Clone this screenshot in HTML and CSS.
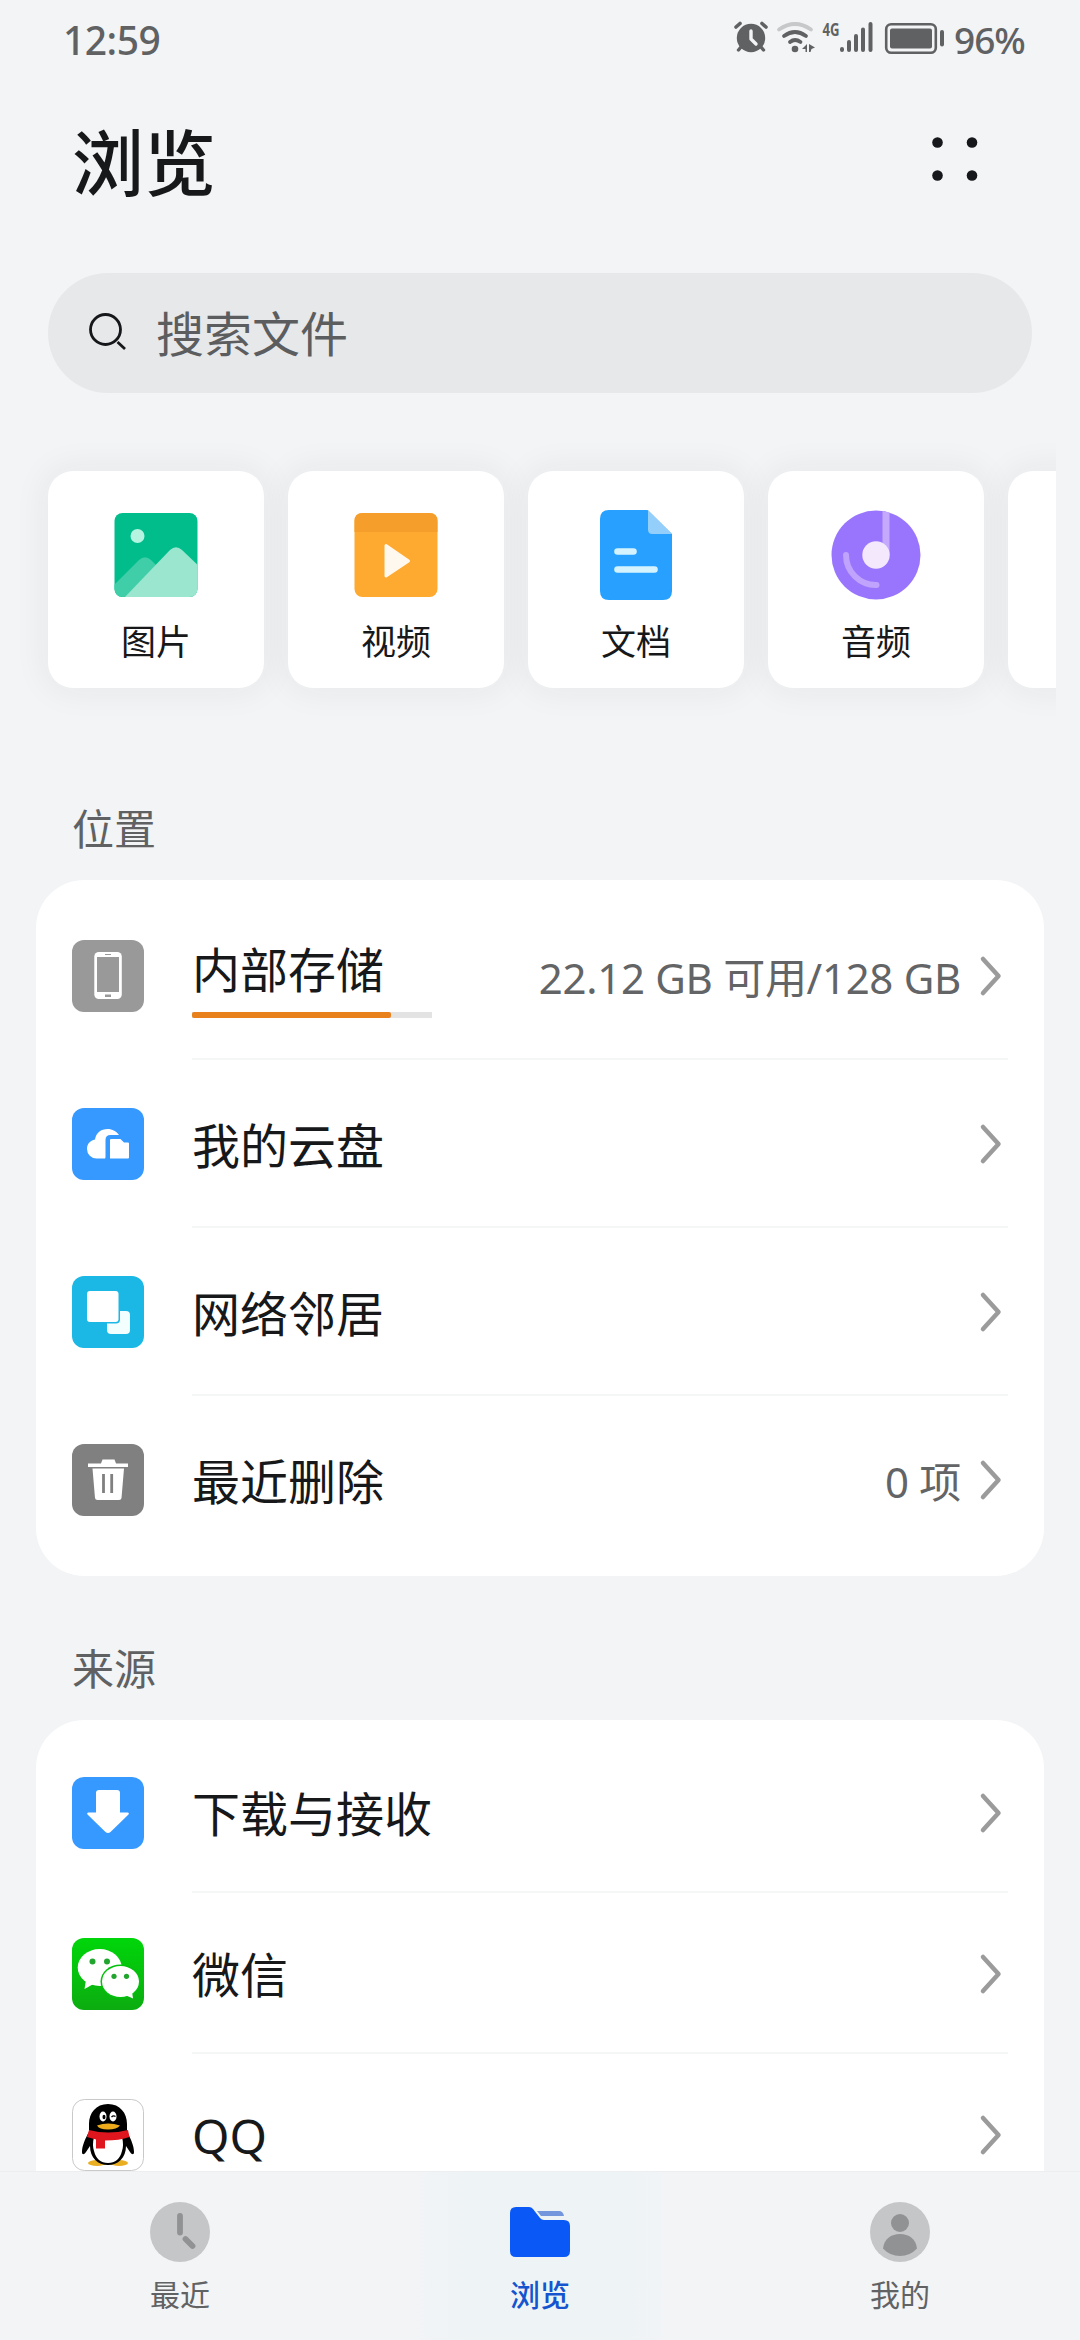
FILE: index.html
```html
<!DOCTYPE html>
<html lang="zh-CN">

<head>
    <meta charset="UTF-8">
    <meta name="viewport" content="width=device-width, initial-scale=1.0">
    <title>浏览</title>
    <link rel="stylesheet" href="styles.css">
</head>

<body>
    <div class="statusbar">
        <span class="time">12:59</span>
        <svg class="status-icons" width="212" height="56" viewBox="733 10 212 56">
            <!-- alarm -->
            <g fill="#5f6163" stroke="#5f6163" stroke-linecap="round">
                <circle cx="751" cy="38" r="14.2" stroke="none" />
                <path d="M736 27l4-3.5M766 27l-4-3.5" stroke-width="3.6" />
                <path d="M741 47l-2.500 3M761 47l2.500 3" stroke-width="3.400" />
            </g>
            <path d="M751 31v8l5 5" fill="none" stroke="#f2f4f6" stroke-width="3.4" stroke-linecap="round" stroke-linejoin="round" />
            <!-- wifi -->
            <g fill="none" stroke="#5f6163" stroke-width="3.8" stroke-linecap="round">
                <path d="M779 29.500q16-11 32 0" stroke="#c6c8ca" />
                <path d="M784 36q11-8 22 0" />
                <path d="M790 42q5-4 10.500 0" />
            </g>
            <circle cx="795" cy="49" r="3.300" fill="#5f6163" />
            <path d="M807 44v8h-1.500v-3H802zM809 44l6 3.500-3.500 1.500-1 3H809z" fill="#5f6163" />
            <!-- signal -->
            <text class="net" x="822.500" y="35.500" textLength="17" lengthAdjust="spacingAndGlyphs">4G</text>
            <path d="M842 49v1M849 42v8M856 36v14M863 29.500V50M870.500 24v26" stroke="#5f6163" stroke-width="4" stroke-linecap="round" />
            <!-- battery -->
            <rect x="886.200" y="24.200" width="49.600" height="28.600" rx="5" fill="none" stroke="#5f6163" stroke-width="2.600" />
            <rect x="890" y="28.500" width="42" height="20" rx="2" fill="#5f6163" />
            <rect x="940" y="30" width="4" height="16.500" rx="2" fill="#5f6163" />
        </svg>
        <span class="percent">96%</span>
    </div>

    <div class="header">
        <h1>浏览</h1>
        <svg class="more" width="48" height="48" viewBox="0 0 48 48" fill="#15171a">
            <circle cx="6.500" cy="7.500" r="5.300" />
            <circle cx="41" cy="7.500" r="5.300" />
            <circle cx="6.500" cy="40.500" r="5.300" />
            <circle cx="41" cy="40.500" r="5.300" />
        </svg>
    </div>

    <div class="search">
        <svg width="48" height="48" viewBox="0 0 48 48" fill="none" stroke="#15171a" stroke-width="2.800">
            <circle cx="21.500" cy="20.500" r="15" />
            <path d="M33.500 33l7.500 7" />
        </svg>
        <span>搜索文件</span>
    </div>

    <div class="types">
        <div class="type">
            <svg width="90" height="90" viewBox="0 0 90 90">
                <clipPath id="pic"><rect x="3.500" y="3" width="83" height="84" rx="8" /></clipPath>
                <g clip-path="url(#pic)">
                    <rect width="90" height="90" fill="#00bd8b" />
                    <path d="M0 78L28 50q6-5.500 12 0L60 70 40 90H0z" fill="#3fcea7" />
                    <path d="M13 88L59 40q6-5.500 12 0L90 58V90H13z" fill="#9be6ce" />
                </g>
                <circle cx="26.500" cy="26" r="7" fill="#b5f4e0" />
            </svg>
            <span>图片</span>
        </div>
        <div class="type">
            <svg width="90" height="90" viewBox="0 0 90 90">
                <rect x="3.500" y="3" width="83" height="84" rx="8" fill="#fea92f" />
                <path d="M3.500 22V11q0-8 8-8h67q8 0 8 8v11z" fill="#f59e2b" />
                <path d="M35 35.500l22.500 15.500L35 66z" fill="#fff8ee" stroke="#fff8ee" stroke-width="3" stroke-linejoin="round" />
            </svg>
            <span>视频</span>
        </div>
        <div class="type">
            <svg width="90" height="90" viewBox="0 0 90 90">
                <path d="M17 0h39.500L81 24v57q0 9-9 9H18q-9 0-9-9V9q0-9 9-9z" fill="#27a0ff" />
                <path d="M57 0L81 24H61.500q-4.500 0-4.500-4.500z" fill="#94cffc" />
                <path d="M26.500 41.500h16M26.500 59.500h37" stroke="#d5f3ff" stroke-width="6.600" stroke-linecap="round" />
            </svg>
            <span>文档</span>
        </div>
        <div class="type">
            <svg width="90" height="90" viewBox="0 0 90 90">
                <circle cx="45" cy="45" r="44.500" fill="#9975fd" />
                <path d="M51.500 1l7 1.500V45h-7z" fill="#c5a9fc" />
                <path d="M15 45a30 30 0 0 0 30.500 30" fill="none" stroke="#c0a3fd" stroke-width="6" stroke-linecap="round" />
                <circle cx="45" cy="45" r="13.700" fill="#f4e8fc" />
            </svg>
            <span>音频</span>
        </div>
        <div class="type"></div>
    </div>

    <h2 class="first">位置</h2>
    <div class="list">
        <div class="row">
            <svg class="icon" viewBox="0 0 72 72">
                <rect width="72" height="72" rx="12" fill="#999" />
                <rect x="22.300" y="12" width="27.500" height="47" rx="4.500" fill="#fff" />
                <path d="M25 17h22v35H25zM33 14h6v1h-6zM33 54.500h6v2.500h-6z" fill="#999" />
            </svg>
            <div class="main">
                <div class="name storage">内部存储
                    <div class="bar"><div class="used" style="width: 82.9%"></div></div>
                </div>
                <span class="value">22.12 GB 可用/128 GB</span>
                <svg class="arrow" viewBox="0 0 24 42"><path d="M4 4l15.500 17L4 38" /></svg>
            </div>
        </div>
        <div class="row">
            <svg class="icon" viewBox="0 0 72 72">
                <rect width="72" height="72" rx="12" fill="#3699ff" />
                <path d="M33 50.500H24.500a9.500 9.500 0 0 1-9.500-9.500c0-5 3-8.500 8-9.500C24 25 29 21 35.500 21c5 0 9 2.500 11.500 6h-8.500q-5 0-5 5V48q0 2.500-.500 2.500z" fill="#fff" />
                <path d="M39 31h9.500l3.500 3.500h4q1 0 1 1v14q0 1-1 1H38V32q0-1 1-1z" fill="#fff" />
            </svg>
            <div class="main">
                <div class="name">我的云盘</div>
                <svg class="arrow" viewBox="0 0 24 42"><path d="M4 4l15.500 17L4 38" /></svg>
            </div>
        </div>
        <div class="row">
            <svg class="icon" viewBox="0 0 72 72">
                <rect width="72" height="72" rx="12" fill="#1cb8e5" />
                <rect x="35" y="35" width="23" height="23" rx="4" fill="#f3feff" />
                <rect x="14" y="14" width="34" height="33.500" rx="4" fill="#1cb8e5" />
                <rect x="15" y="15" width="31.500" height="31" rx="3" fill="#fff" />
            </svg>
            <div class="main">
                <div class="name">网络邻居</div>
                <svg class="arrow" viewBox="0 0 24 42"><path d="M4 4l15.500 17L4 38" /></svg>
            </div>
        </div>
        <div class="row">
            <svg class="icon" viewBox="0 0 72 72">
                <rect width="72" height="72" rx="12" fill="#808080" />
                <path d="M16 19.500h13l1.500-4h12l1.500 4h12v3.500H16zM20.500 24.500h31.500l-2.500 29.500q-.300 2-2.500 2H25.500q-2.200 0-2.500-2z" fill="#fff" />
                <path d="M31.500 30v19M39.700 30v19" stroke="#808080" stroke-width="2.800" />
            </svg>
            <div class="main">
                <div class="name">最近删除</div>
                <span class="value">0 项</span>
                <svg class="arrow" viewBox="0 0 24 42"><path d="M4 4l15.500 17L4 38" /></svg>
            </div>
        </div>
    </div>

    <h2>来源</h2>
    <div class="list source">
        <div class="row">
            <svg class="icon" viewBox="0 0 72 72">
                <rect width="72" height="72" rx="12" fill="#3699ff" />
                <path d="M27 13h18q3 0 3 3v19.500h8q1.500.500.500 2L38.500 55q-2.500 2-5 0L15.500 37.500q-1-1.500.500-2h8V16q0-3 3-3z" fill="#fff" />
            </svg>
            <div class="main">
                <div class="name">下载与接收</div>
                <svg class="arrow" viewBox="0 0 24 42"><path d="M4 4l15.500 17L4 38" /></svg>
            </div>
        </div>
        <div class="row">
            <svg class="icon" viewBox="0 0 72 72">
                <linearGradient id="wx" x2="0" y2="1">
                    <stop stop-color="#00d60a" />
                    <stop offset="1" stop-color="#0cac10" />
                </linearGradient>
                <rect width="72" height="72" rx="12" fill="url(#wx)" />
                <ellipse cx="27.700" cy="29.500" rx="22" ry="18.500" fill="#fff" />
                <path d="M14 42l-1.500 9 9-5z" fill="#fff" />
                <ellipse cx="48.500" cy="43.500" rx="20" ry="17" fill="#04c00c" />
                <ellipse cx="48.500" cy="43.500" rx="18.500" ry="15.500" fill="#fff" />
                <path d="M53 57l8 3.500-1-7z" fill="#fff" />
                <g fill="#22a52f">
                    <circle cx="20.500" cy="23.500" r="3" />
                    <circle cx="35" cy="23.500" r="3" />
                    <circle cx="42" cy="38.300" r="2.600" />
                    <circle cx="54.500" cy="38.300" r="2.600" />
                </g>
            </svg>
            <div class="main">
                <div class="name">微信</div>
                <svg class="arrow" viewBox="0 0 24 42"><path d="M4 4l15.500 17L4 38" /></svg>
            </div>
        </div>
        <div class="row">
            <svg class="icon" viewBox="0 0 72 72">
                <rect x=".500" y=".500" width="71" height="71" rx="12" fill="#fff" stroke="#c9c9c9" />
                <ellipse cx="25" cy="64" rx="9" ry="3" fill="#e9ae22" />
                <ellipse cx="47" cy="64" rx="9" ry="3" fill="#e9ae22" />
                <path d="M36 5C24 5 17 14 17 25v8c-4 7-7 14-7 20 0 3 2 3 4 0l4-6c0 12 8 19 18 19s18-7 18-19l4 6c2 3 4 3 4 0 0-6-3-13-7-20v-8C55 14 48 5 36 5z" />
                <path d="M22 38h28q2 8 0 14-3 12-14 12T22 52q-2-6 0-14z" fill="#fff" />
                <path d="M17 31q19 5 39 0l1.500 7q-10 3.500-24.500 3.500v8h-9v-9L15 38z" fill="#e0161f" />
                <ellipse cx="31" cy="17.500" rx="3.500" ry="5" fill="#fff" />
                <ellipse cx="41" cy="17.500" rx="3.500" ry="5" fill="#fff" />
                <ellipse cx="32" cy="18" rx="1.500" ry="2.300" />
                <path d="M39.500 18q2-2 4-.500" fill="none" stroke="#000" stroke-width="1.300" />
                <path d="M25 26.500q11-4 23 0-3 4-12 4t-11-4z" fill="#eeac1c" />
            </svg>
            <div class="main">
                <div class="name">QQ</div>
                <svg class="arrow" viewBox="0 0 24 42"><path d="M4 4l15.500 17L4 38" /></svg>
            </div>
        </div>
    </div>

    <div class="tabs">
        <div class="tab">
            <svg width="60" height="60" viewBox="0 0 60 60">
                <circle cx="30" cy="30" r="30" fill="#c5c6c8" />
                <path d="M30 14v16.500M35.500 37l7 7" stroke="#919294" stroke-width="5.800" stroke-linecap="round" />
            </svg>
            <span>最近</span>
        </div>
        <div class="tab active">
            <svg width="60" height="60" viewBox="0 0 60 60">
                <path d="M6 5h13q2.500 0 4 2l7 9q1.500 2 4 2h20q6 0 6 6v25q0 6-6 6H6q-6 0-6-6V11q0-6 6-6z" fill="#0a59f7" />
                <path d="M27 9h22q4 0 5 5H31z" fill="#7396dc" />
            </svg>
            <span>浏览</span>
        </div>
        <div class="tab">
            <svg width="60" height="60" viewBox="0 0 60 60">
                <circle cx="30" cy="30" r="30" fill="#c5c6c8" />
                <circle cx="30" cy="21" r="9" fill="#919294" />
                <path d="M13 46.500C14 37 21 32 30 32s16 5 17 14.500Q40 54 30 54t-17-7.500z" fill="#919294" />
            </svg>
            <span>我的</span>
        </div>
    </div>
</body>

</html>
```
FILE: styles.css
```css
* {
    box-sizing: border-box;
}

body {
    display: flex;
    flex-direction: column;
    width: 1080px;
    height: 2340px;
    margin: 0;
    overflow: hidden;
    background-color: #f2f4f6;
    color: #17181a;
    font-family: "Noto Sans", "Noto Sans CJK SC", sans-serif;
}

svg {
    display: block;
    flex: none;
}

.statusbar {
    display: flex;
    flex: none;
    align-items: center;
    height: 80px;
    padding: 0 57px 0 63px;
    color: #5f6163;
    font-size: 39px;
    font-weight: 500;
    line-height: 80px;
    letter-spacing: -0.5px;
}

.status-icons {
    margin: 0 9px 4px auto;
}

.net {
    fill: #5f6163;
    font-size: 18px;
    font-weight: bold;
    letter-spacing: 0;
}

.percent {
    font-size: 37px;
    letter-spacing: -1px;
    width: 69px;
    white-space: nowrap;
}

.header {
    display: flex;
    flex: none;
    align-items: center;
    justify-content: space-between;
    height: 160px;
    padding: 0 101px 0 72px;
}

h1 {
    margin: 3px 0 0;
    font-size: 72px;
    font-weight: 500;
    line-height: 100px;
}

.more {
    margin-bottom: 3px;
}

.search {
    display: flex;
    flex: none;
    align-items: center;
    height: 120px;
    margin: 33px 48px 0;
    padding: 0 36px;
    border-radius: 60px;
    background-color: #e7e8ea;
    color: #5c5d5f;
    font-size: 48px;
    line-height: 70px;
}

.search span {
    margin: 2px 0 0 24px;
}

.search svg {
    align-self: flex-end;
    margin-bottom: 36px;
}

.types {
    display: flex;
    flex: none;
    gap: 24px;
    width: 1056px;
    height: 297px;
    padding: 38px 0 42px 48px;
    margin-top: 40px;
    overflow: hidden;
}

.type {
    display: flex;
    flex: none;
    flex-direction: column;
    align-items: center;
    width: 216px;
    height: 217px;
    padding-top: 39px;
    border-radius: 25px;
    background-color: #fff;
    box-shadow: 0 0 32px 6px rgba(30, 40, 40, 0.05);
    font-size: 35px;
    line-height: 50px;
}

.type span {
    margin-top: 17px;
}

h2 {
    flex: none;
    margin: 0;
    padding: 68px 72px 0;
    height: 144px;
    color: #5f6163;
    font-size: 42px;
    font-weight: 400;
    line-height: 50px;
}

h2.first {
    height: 150px;
    padding-top: 74px;
}

.list {
    flex: none;
    margin: 0 36px;
    padding: 12px 36px;
    border-radius: 48px;
    background-color: #fff;
}

.row {
    display: flex;
    align-items: center;
    height: 168px;
}

.icon {
    width: 72px;
    height: 72px;
}

.main {
    display: flex;
    flex: 1;
    align-items: center;
    height: 100%;
    margin-left: 48px;
    padding-top: 2px;
    border-bottom: 2px solid #f5f6f6;
}

.row:last-child .main {
    border-bottom-color: transparent;
}

.name {
    flex: 1;
    padding-top: 3px;
    font-size: 48px;
    line-height: 70px;
}

.storage {
    padding-top: 0;
}

.bar {
    width: 240px;
    height: 6px;
    margin-top: 7px;
    background-color: #e3e3e3;
}

.used {
    height: 6px;
    border-radius: 2px;
    background-color: #e8801b;
}

.value {
    padding-top: 3px;
    color: #636466;
    font-size: 42px;
    line-height: 60px;
    letter-spacing: -0.3px;
    margin-right: 18px;
}

.arrow {
    width: 24px;
    height: 42px;
    margin-right: 5px;
    fill: none;
    stroke: #9b9b9b;
    stroke-width: 4.5;
    stroke-linecap: round;
    stroke-linejoin: round;
}

/* second card runs on below the tab bar */
.source {
    flex: 0 0 451px;
    overflow: hidden;
    padding-bottom: 0;
    border-radius: 48px 48px 0 0;
}

.source .row {
    height: 161px;
}

.tabs {
    display: flex;
    flex: 1;
    border-top: 1px solid #eceeef;
    background-color: #f2f4f6;
}

.tab {
    display: flex;
    flex: 1;
    flex-direction: column;
    align-items: center;
    padding-top: 30px;
    color: #616264;
    font-size: 30px;
    line-height: 40px;
}

.tab span {
    margin-top: 13px;
}

.active {
    background: linear-gradient(90deg, transparent 15%, #eef3f6 30%, #eef3f6 75%, transparent 85%);
    color: #1455cf;
    font-weight: 500;
}
```
